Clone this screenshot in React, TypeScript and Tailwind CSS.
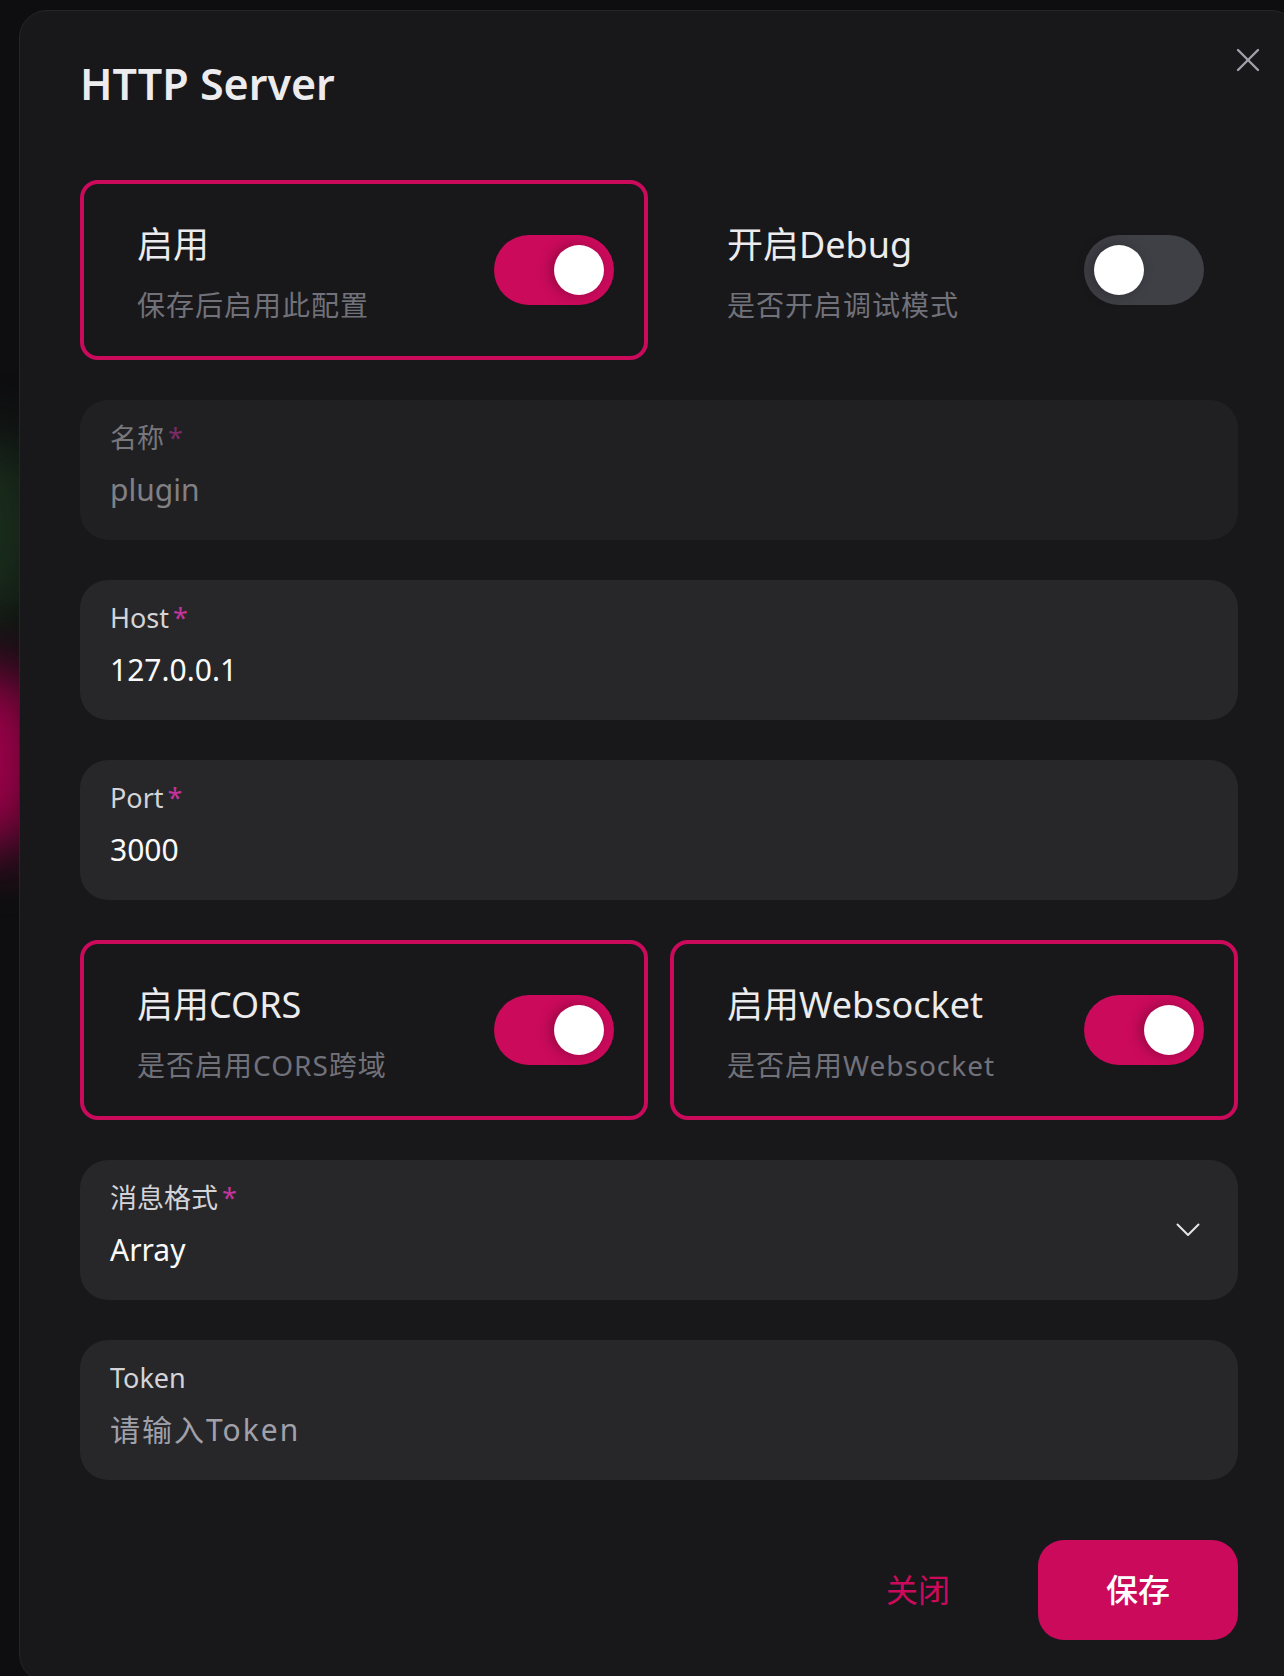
import React from "react";

const font = "font-['Noto_Sans','Noto_Sans_CJK_SC',sans-serif]";

const Toggle = ({ on }: { on: boolean }) => {
  return (
    <div
      className={`flex h-[70px] w-[120px] shrink-0 items-center rounded-full p-[10px] ${
        on ? "justify-end bg-[#cc0a5c]" : "justify-start bg-[#3f3f46]"
      }`}
    >
      <div className="h-[50px] w-[50px] rounded-full bg-white shadow-[-4px_0_14px_rgba(0,0,0,0.28)]" />
    </div>
  );
};

const SwitchCard = ({ title, desc, on }: { title: string; desc: string; on: boolean }) => {
  return (
    <div
      className={`flex h-[180px] items-center justify-between rounded-[18px] border-4 pl-[53px] pr-[30px] ${
        on ? "border-[#cc0a5c]" : "border-transparent"
      }`}
    >
      <div className="mt-[4px] flex flex-col gap-[17px]">
        <span className="text-[36px] leading-[48px] text-[#ececee]">{title}</span>
        <span className="text-[28px] leading-[38px] tracking-[1px] text-[#71717a]">{desc}</span>
      </div>
      <Toggle on={on} />
    </div>
  );
};

const Field = ({
  label,
  value,
  required,
  disabled,
  placeholder,
  select,
}: {
  label: string;
  value?: string;
  required?: boolean;
  disabled?: boolean;
  placeholder?: string;
  select?: boolean;
}) => {
  return (
    <div
      className={`relative h-[140px] rounded-[28px] px-[30px] pt-[21px] ${
        disabled ? "bg-[#202023]" : "bg-[#27272a]"
      }`}
    >
      <div className={`flex text-[27px] leading-[34px] ${disabled ? "text-[#77777c]" : "text-[#d4d4d8]"}`}>
        <span>{label}</span>
        {required && (
          <span className={`ml-[4px] ${disabled ? "text-[#7a2a64]" : "text-[#c2349b]"}`}>*</span>
        )}
      </div>
      <div
        className={`mt-[16px] text-[30px] leading-[38px] ${
          value ? (disabled ? "text-[#808085]" : "text-[#fafafa]") : "tracking-[2px] text-[#a1a1aa]"
        }`}
      >
        {value || placeholder}
      </div>
      {select && (
        <svg
          className="absolute right-[38px] top-[63px]"
          width="24"
          height="14"
          viewBox="0 0 24 14"
          fill="none"
          stroke="#e4e4e7"
          strokeWidth="2"
          strokeLinecap="round"
          strokeLinejoin="round"
        >
          <polyline points="1.5,1.5 12,12 22.5,1.5" />
        </svg>
      )}
    </div>
  );
};

const App = () => {
  return (
    <div className={`relative h-[1676px] w-full overflow-hidden bg-[#0e0e10] ${font}`}>
      {/* glows behind the modal */}
      <div className="absolute left-[-70px] top-[440px] h-[180px] w-[110px] rounded-full bg-[#1a2e1c] blur-[30px]" />
      <div className="absolute left-[-70px] top-[670px] h-[180px] w-[110px] rounded-full bg-[#a0004a] blur-[30px]" />

      <div className="relative ml-[19px] mt-[10px] h-[1672px] w-[1280px] rounded-[28px] border border-[#26262a] bg-[#18181b]">
        <button className="absolute right-[38px] top-[37px] flex h-[24px] w-[24px] items-center justify-center">
          <svg width="24" height="24" viewBox="0 0 24 24" fill="none" stroke="#a1a1aa" strokeWidth="2.4" strokeLinecap="round">
            <line x1="2" y1="2" x2="22" y2="22" />
            <line x1="22" y1="2" x2="2" y2="22" />
          </svg>
        </button>

        <div className="px-[60px] pt-[47px]">
          <h2 className="text-[43px] font-semibold leading-[52px] text-[#ececee]">HTTP Server</h2>

          <div className="mt-[70px] flex flex-col gap-[40px]">
            <div className="grid grid-cols-2 gap-[22px]">
              <SwitchCard title="启用" desc="保存后启用此配置" on />
              <SwitchCard title="开启Debug" desc="是否开启调试模式" on={false} />
            </div>
            <Field label="名称" value="plugin" required disabled />
            <Field label="Host" value="127.0.0.1" required />
            <Field label="Port" value="3000" required />
            <div className="grid grid-cols-2 gap-[22px]">
              <SwitchCard title="启用CORS" desc="是否启用CORS跨域" on />
              <SwitchCard title="启用Websocket" desc="是否启用Websocket" on />
            </div>
            <Field label="消息格式" value="Array" required select />
            <Field label="Token" placeholder="请输入Token" />
          </div>

          <div className="mt-[60px] flex justify-end gap-[20px]">
            <button className="flex h-[100px] w-[200px] items-center justify-center rounded-[26px] text-[32px] text-[#cc0a5c]">
              关闭
            </button>
            <button className="flex h-[100px] w-[200px] items-center justify-center rounded-[26px] bg-[#cc0a5c] text-[32px] font-medium text-white">
              保存
            </button>
          </div>
        </div>
      </div>
    </div>
  );
};

export default App;
